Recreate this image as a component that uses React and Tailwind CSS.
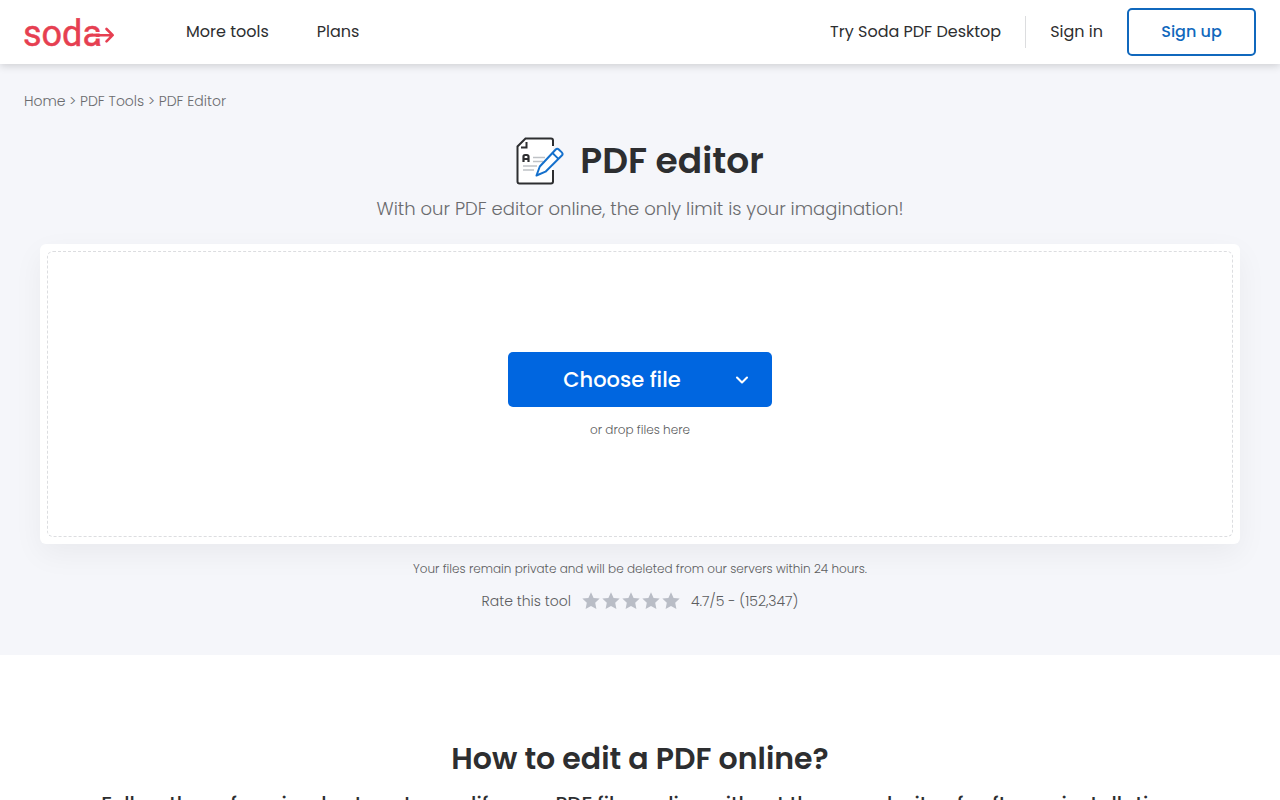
import { useState } from 'react'
import { ChevronDown } from 'lucide-react'

const breadcrumbs = [
  { label: 'Home', href: '#home' },
  { label: 'PDF Tools', href: '#tools' },
  { label: 'PDF Editor', href: '#editor' },
]

function Logo() {
  return (
    <svg
      width="92"
      height="48"
      viewBox="0 0 92 48"
      role="img"
      aria-label="soda"
      fill="none"
      className="overflow-visible"
    >
      <text x="-1" y="38" fontSize="36" fontWeight="400" fontFamily="Roboto, sans-serif" fill="#e63f51" stroke="#e63f51" strokeWidth="0.500">
        soda
      </text>
      {/* Arrow running out of the last letter */}
      <path d="M69 24.700H79M69 29.800H79" stroke="#fff" strokeWidth="1.400" />
      <path
        d="M65 27.200H88.500M82.500 21l6.200 6.200-6.200 6.200"
        stroke="#e63f51"
        strokeWidth="2.600"
        strokeLinecap="round"
        strokeLinejoin="round"
      />
    </svg>
  )
}

function EditorIcon() {
  return (
    <svg width="48" height="48" viewBox="0 0 48 48" fill="none" aria-hidden="true">
      <path
        d="M37 9V3.500a2 2 0 0 0-2-2H9.500L1.500 9.500v35a2 2 0 0 0 2 2H35a2 2 0 0 0 2-2V33"
        fill="#fff"
        stroke="#2d2e30"
        strokeWidth="2"
      />
      <path d="M5 10.500h5.500V5" stroke="#2d2e30" strokeWidth="2" />
      <path
        d="M7.500 25v-5.500a1.500 1.500 0 0 1 1.500-1.500h2a1.500 1.500 0 0 1 1.500 1.500V25M7.500 22h5"
        stroke="#2d2e30"
        strokeWidth="2.200"
      />
      <path d="M17 20.500h12M17 24.500h10M7 29h14M7 33h11" stroke="#bfc2c6" strokeWidth="1.500" />
      <path
        d="M20.500 38.500l3.300-9L39.700 12.500a2.200 2.200 0 0 1 3.100 0l3 2.900a2.200 2.200 0 0 1 0 3.100L29.500 34.700z"
        fill="#fff"
        stroke="#1470cc"
        strokeWidth="2"
        strokeLinejoin="round"
      />
      <path d="M36.500 16l5.900 5.900" stroke="#1470cc" strokeWidth="1.800" />
    </svg>
  )
}

function StarRating() {
  const [rating, setRating] = useState(0)

  return (
    <div className="flex gap-0.5">
      {[1, 2, 3, 4, 5].map((n) => (
        <button
          key={n}
          type="button"
          onClick={() => setRating(n)}
          aria-label={`Rate ${n} out of 5`}
          className={n <= rating ? 'cursor-pointer text-amber-400' : 'cursor-pointer text-[#b9bdc6]'}
        >
          <svg width="18" height="18" viewBox="0 0 18 18" fill="currentColor" className="block">
            <path d="M9 .3l2.600 5.600 6.100.7-4.500 4.200 1.200 6.100L9 13.900l-5.400 3L4.800 10.800.3 6.600l6.100-.7z" />
          </svg>
        </button>
      ))}
    </div>
  )
}

function Header() {
  return (
    <header className="relative z-10 flex h-16 items-center justify-between bg-white px-6 shadow-[0_2px_8px_rgba(0,0,0,0.16)]">
      <div className="flex items-center">
        <a href="#home">
          <Logo />
        </a>
        <nav className="ml-[70px] flex gap-12">
          <a href="#tools">More tools</a>
          <a href="#plans">Plans</a>
        </nav>
      </div>
      <div className="flex items-center gap-6">
        <a href="#desktop">Try Soda PDF Desktop</a>
        <div className="h-8 w-px bg-[#dcdddf]" />
        <a href="#signin">Sign in</a>
        <button
          type="button"
          className="h-12 w-[129px] cursor-pointer rounded-[5px] border-2 border-[#1068bd] font-medium text-[#1068bd]"
        >
          Sign up
        </button>
      </div>
    </header>
  )
}

export default function App() {
  return (
    <div className="min-h-screen bg-white font-['Poppins','Inter',sans-serif] text-base text-[#2d2e30]">
      <Header />

      <main>
        <section className="bg-[#f5f6fa] pt-[25px] pb-[42px]">
          <nav aria-label="Breadcrumb" className="px-6 text-sm leading-6 font-light text-[#6a6b6e]">
            {breadcrumbs.map((item, i) => (
              <span key={item.label}>
                {i > 0 && ' > '}
                <a href={item.href}>{item.label}</a>
              </span>
            ))}
          </nav>

          <div className="mt-6 flex items-center justify-center gap-4">
            <EditorIcon />
            <h1 className="text-4xl leading-[48px] font-semibold">PDF editor</h1>
          </div>
          <p className="mt-2 text-center text-lg leading-8 font-light text-[#6a6b6e]">
            With our PDF editor online, the only limit is your imagination!
          </p>

          {/* Drop zone */}
          <div className="mx-10 mt-[19px] rounded-md bg-white p-[7px] shadow-[0_10px_30px_rgba(0,0,0,0.05)]">
            <div className="flex h-[286px] flex-col items-center rounded-md border border-dashed border-[#dcdde0] pt-[100px]">
              <div className="flex h-[55px] w-66 rounded-[5px] bg-[#0066e0] text-white">
                <button type="button" className="grow cursor-pointer pl-6 text-[21px] font-medium">
                  Choose file
                </button>
                <button
                  type="button"
                  aria-label="More upload options"
                  className="flex w-15 cursor-pointer items-center justify-center"
                >
                  <ChevronDown size={20} strokeWidth={2.5} />
                </button>
              </div>
              <p className="mt-[11px] text-xs leading-6 font-light text-[#5c5d60]">or drop files here</p>
            </div>
          </div>

          <p className="mt-[13px] text-center text-xs leading-6 font-light text-[#5c5d60]">
            Your files remain private and will be deleted from our servers within 24 hours.
          </p>
          <div className="mt-2 flex items-center justify-center gap-[11px] text-sm leading-6 font-light text-[#5c5d60]">
            <span>Rate this tool</span>
            <StarRating />
            <span>4.7/5 - (152,347)</span>
          </div>
        </section>

        <section className="px-6 pt-20 pb-20 text-center">
          <h2 className="text-3xl leading-[48px] font-semibold">How to edit a PDF online?</h2>
          <p className="mt-[5px] text-xl leading-8 font-medium">
            Follow these few simple steps to modify your PDF files online without the complexity of software installation.
          </p>
        </section>
      </main>
    </div>
  )
}
